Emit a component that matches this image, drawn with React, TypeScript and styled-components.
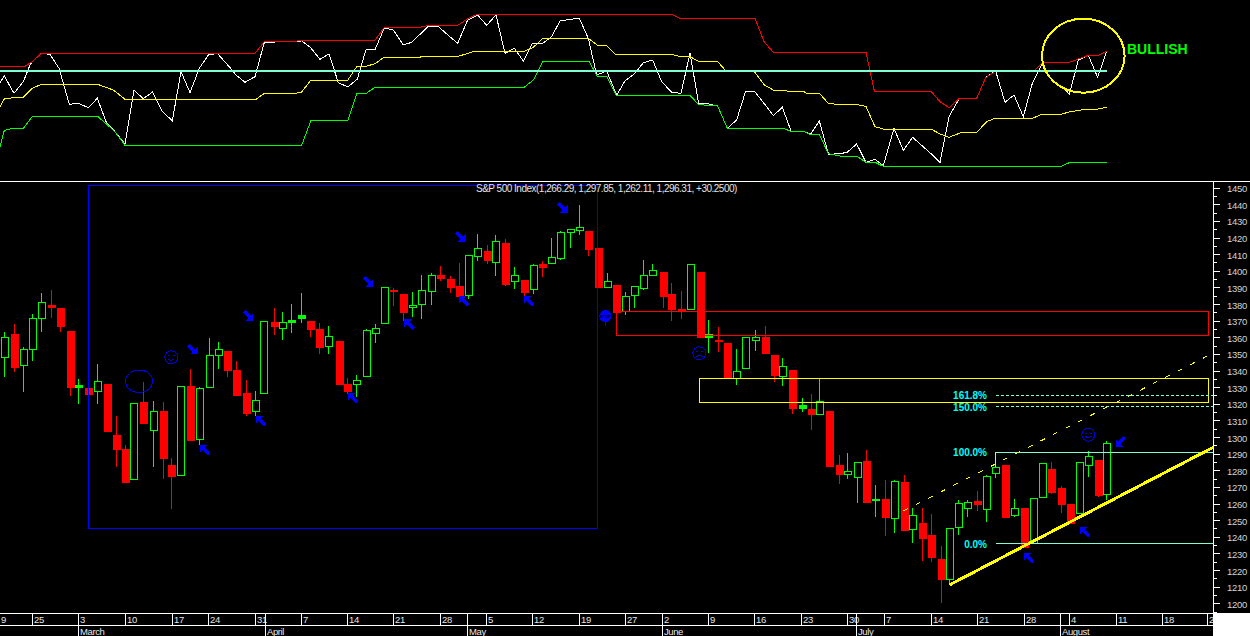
import React from 'react'
import styled, { createGlobalStyle } from 'styled-components'

const GREEN = '#00ff00'
const RED = '#ff0000'
const BLUE = '#0000ff'
const YELLOW = '#ffff00'
const AQUA = '#7fffd4'

const GlobalStyle = createGlobalStyle`
  html, body {
    margin: 0;
    height: 636px;
    overflow: hidden;
    background: #000;
    font-family: "Liberation Sans", Arial, sans-serif;
  }
`
const Page = styled.div`
  width: 1250px;
  height: 636px;
  display: flex;
  flex-direction: column;
  overflow: hidden;
  background: #000;
`
const IndicatorPanel = styled.div`
  height: 181px;
  flex: none;
  border-bottom: 1px solid #fff;
`
const Plot = styled.svg`
  display: block;
  shape-rendering: crispEdges;
`
const MainRow = styled.div`
  height: 431px;
  flex: none;
  display: flex;
`
const ChartArea = styled.div`
  position: relative;
  width: 1213px;
  flex: none;
`
const ChartTitle = styled.div`
  position: absolute;
  left: 476px;
  top: 0;
  font-size: 10px;
  letter-spacing: -0.5px;
  line-height: 13px;
  color: #e4e4e4;
  white-space: nowrap;
`
const PriceAxis = styled.div`
  flex: 1;
  border-left: 1px solid #fff;
  padding-top: 2px;
  overflow: hidden;
`
const PriceRow = styled.div`
  height: 8.32px;
  display: flex;
  align-items: center;
`
const TickSlot = styled.div`
  width: 13px;
  flex: none;
`
const Tick = styled.div<{ $major: boolean }>`
  width: ${(p) => (p.$major ? 6 : 3)}px;
  height: 1px;
  background: #fff;
`
const PriceLabel = styled.span`
  margin-top: 2px;
  font-size: 9.5px;
  letter-spacing: -0.3px;
  line-height: 8px;
  color: #d4d4d4;
`
const BottomRow = styled.div`
  flex: 1;
  display: flex;
`
const DateColumn = styled.div`
  width: 1213px;
  flex: none;
  border-top: 1px solid #fff;
`
const DateRow = styled.div`
  height: 11px;
  display: flex;
  border-bottom: 1px solid #fff;
`
const MonthRow = styled.div`
  height: 10px;
  display: flex;
`
const AxisCell = styled.div<{ $width: number; $open?: boolean }>`
  width: ${(p) => p.$width}px;
  flex: none;
  box-sizing: border-box;
  padding-left: 1px;
  border-left: ${(p) => (p.$open ? 'none' : '1px solid #fff')};
  font-size: 9.5px;
  letter-spacing: -0.4px;
  line-height: 11px;
  color: #e8e8e8;
  white-space: nowrap;
`
const Corner = styled.div`
  flex: 1;
  background: #fff;
`
const Bullish = styled.text`
  font-size: 14px;
  font-weight: 700;
  fill: ${GREEN};
`
const FibLabel = styled.text`
  font-size: 10px;
  font-weight: 700;
  fill: #00ffff;
  text-anchor: end;
`
const StopText = styled.text`
  font-size: 4px;
  font-weight: 700;
  fill: #000;
  text-anchor: middle;
`

// everything below was traced off the 3x crops, so divide by 3 and add the crop origin
const trace = (ox: number, oy: number, flat: number[]) => {
  const out: string[] = []
  for (let i = 0; i < flat.length; i += 2) {
    out.push(`${ox + flat[i] / 3},${oy + flat[i + 1] / 3}`)
  }
  return out.join(' ')
}

const indicatorLines: [string, string][] = [
  ['#fff', trace(0, 0, [0,248,13,228,42,280,70,245,90,195,97,185,124,160,150,163,177,205,208,313,236,310,265,323,292,295,320,370,345,395,375,432,402,271,430,296,458,276,487,335,517,362,543,215,570,278,598,205,625,165,652,160,692,205,708,225,735,247,765,230,793,127,890,124,905,123,932,143,960,178,987,162,1015,248,1044,261,1072,237,1098,149,1125,149,1153,84,1180,90,1210,135,1235,127,1260,103])],
  ['#fff', trace(420, 0, [0,103,25,78,55,80,113,130,143,60,173,45,200,76,228,45,255,160,283,145,310,183,337,130,368,130,395,110,420,63,450,58,478,55,505,115,530,225,560,213,590,285,615,243,645,220,670,188,698,180,725,245,755,277,783,280,810,160,836,310,858,310,893,318,922,385,950,360,977,273,1003,273,1032,310,1060,347,1087,322,1113,393,1150,394,1172,402,1198,363,1225,461])],
  ['#fff', trace(830, 0, [-5,464,50,458,80,432,108,487,135,478,160,497,192,385,220,451,248,412,302,460,330,488,357,350,388,295,440,295,467,233,497,213,525,307,552,285,580,350,607,250,638,187])],
  ['#fff', trace(830, 0, [705,268,718,283,745,180,775,166,803,232,830,154])],
  [YELLOW, trace(0, 0, [0,320,14,295,70,292,97,265,124,253,293,253,340,270,375,298,768,298,793,280,888,280,905,276,932,241,1043,241,1070,200,1098,199,1125,191,1152,172,1260,172])],
  [YELLOW, trace(420, 0, [0,172,5,169,115,169,163,154,312,154,340,142,368,115,505,115,532,135,558,135,586,163,755,163,783,170,810,170,835,184,892,184,920,215,1003,215,1032,254,1060,270,1095,270,1100,273,1150,274,1160,280,1198,280,1225,310,1260,314])],
  [YELLOW, trace(830, 0, [30,314,80,314,108,319,135,380,160,387,303,387,330,402,357,412,395,397,440,397,470,365,497,354,610,354,635,343,693,343,720,335,775,327,805,327,830,322])],
  [GREEN, trace(0, 0, [0,440,13,391,40,385,70,385,97,349,293,349,345,395,375,436,905,436,933,361,1044,361,1070,281,1098,281,1124,262,1260,262])],
  [GREEN, trace(420, 0, [0,262,312,262,340,240,368,184,507,184,532,229,560,229,588,286,810,286,836,314,893,318,922,385,1090,385,1112,394,1150,394,1170,403,1198,403,1225,461,1260,468])],
  [GREEN, trace(830, 0, [30,468,80,468,108,487,135,487,160,499,693,499,720,487,830,487])],
  [RED, trace(0, 0, [0,199,75,199,97,185,124,160,765,160,793,125,890,124,893,121,1125,121,1153,82,1260,82])],
  [RED, trace(420, 0, [0,82,30,75,115,75,145,55,172,43,755,43,780,55,1005,55,1032,125,1060,157,1260,157])],
  [RED, trace(830, 0, [30,157,108,157,133,273,302,273,330,305,357,323,388,295,440,295,467,233,497,213,612,213,638,187,718,187,775,166,805,166,830,154])],
]

type Kind = 'g' | 'r' | 'G'
// kind, x, box top, box bottom, wick top, wick bottom
type Row = [Kind, number, number, number, number?, number?]
type Candle = { kind: Kind; x: number; top: number; bottom: number; high: number; low: number }

const candleSet = (ox: number, oy: number, rows: Row[]): Candle[] =>
  rows.map(([kind, x, top, bottom, high, low]) => ({
    kind,
    x: ox + x / 3,
    top: oy + top / 3,
    bottom: oy + bottom / 3,
    high: oy + (high ?? top) / 3,
    low: oy + (low ?? bottom) / 3,
  }))

const candles: Candle[] = [
  ...candleSet(0, 280, [
    ['g',14,172,232,156,290],['r',44,162,260,132,275],['g',69,208,254,201,335],['g',96,115,208,102,243],
    ['g',125,67,115,40,155],['r',154,75,80,30,113],['r',182,84,137,84,155],['r',210,153,320,153,347],
    ['G',236,316,320,297,371],['r',265,324,341,318,434],['g',292,304,334,252,371],['r',321,312,453,312,456],
    ['r',350,465,507,408,560],['r',377,507,605,495,605],['g',401,370,598],['r',431,366,429,306,432],
    ['g',459,394,449,363,560],['r',489,393,533,366,597],['r',515,555,587,534,687],['g',541,319,586],
    ['r',571,318,480,267,480],['g',598,325,476,321,495],['g',627,226,320,174,320],['g',654,208,226,186,267],
    ['r',682,213,269,213,290],['r',710,270,344,243,344],['r',738,339,398,300,407],['g',765,361,392,333,407],
  ]),
  ...candleSet(240, 190, [
    ['g',71,392,610],['r',102,396,407,354,435],['g',127,397,415,366,449],['G',155,390,395,342,429],
    ['G',185,375,383,309,398],['r',212,393,416,393,441],['r',239,417,471,399,491],['g',266,439,467,408,491],
    ['r',297,453,581,453,585],['r',323,582,603,564,611],['g',349,571,583,555,620],['g',378,421,559,417,559],
    ['g',405,415,428,402,458],['g',433,292,400],['r',461,301,304,294,347],['r',490,312,365,312,392],
    ['g',516,346,352,306,381],['g',544,299,341,255,386],['g',573,256,304,250,345],['r',602,255,263,228,272],
    ['r',630,267,291,258,308],['r',657,288,317,220,317],['g',684,196,314,196,328],['g',711,175,199,132,212],
    ['r',741,183,209,165,221],['g',767,154,217,135,258],['r',795,159,281,148,287],['g',822,256,274,232,296],
    ['r',852,270,305,270,320],['g',879,226,298,222,312],
  ]),
  ...candleSet(470, 180, [
    ['r',217,252,261,243,291],['g',243,232,248,174,248],['g',270,156,233,153,239],['g',300,148,155,148,204],
    ['g',327,142,149,75,165],['r',355,153,207,153,228],['r',384,204,321],['g',411,304,320,279,320],
    ['r',439,315,395],['g',467,347,393,336,405],['g',493,319,344,319,384],['g',520,284,323,240,330],
    ['g',548,271,284,252,284],['r',579,276,347,276,384],['r',605,342,387,309,423],['r',633,387,394,333,417],
    ['g',660,253,386],['r',690,276,471,276,474],['G',716,462,470,420,519],['r',745,480,483,441,516],
    ['g',826,472,565],['g',855,472,479,450,513],['r',885,471,519,438,519],
  ]),
  ...candleSet(690, 340, [
    ['r',112,9,115],['g',138,94,115,27,135],['r',252,45,104,45,125],['g',277,79,109,55,138],
    ['r',306,90,203,90,222],['G',336,195,203,174,216],['r',363,207,221,162,270],['g',389,184,221,115,221],
    ['r',417,213,377],['r',447,376,401,345,432],['g',472,393,401,339,417],['g',501,367,410,367,489],
    ['r',530,363,485,330,485],['G',556,477,480,435,531],['r',585,477,531,420,588],['g',612,424,533,420,579],
    ['r',642,426,570,405,570],['g',667,526,566,504,609],['r',696,549,594,504,663],['r',723,585,651,522,666],
    ['r',753,657,717,618,789],['g',778,565,718,565,735],
  ]),
  ...candleSet(950, 340, [
    ['g',25,490,560,480,585],['g',53,487,503,480,531],['r',83,484,492,453,513],['g',109,409,506,405,546],
    ['g',137,382,398,370,414],['r',166,375,531,375,533],['g',192,505,524,477,530],['r',222,504,620],
    ['g',249,475,610],['g',276,370,470],['r',305,387,457,366,463],['r',333,444,491,438,519],
    ['r',360,491,549],['g',387,367,518],['g',415,347,374,333,411],['r',444,360,465,360,471],
    ['g',470,310,461,304,481],
  ]),
]

const CandleMark = ({ candle }: { candle: Candle }) => {
  const { kind, x, top, bottom, high, low } = candle
  const cx = Math.floor(x)
  const color = kind === 'r' ? RED : GREEN
  const y = Math.round(top)
  const h = Math.max(Math.round(bottom) - y, 1)
  return (
    <g>
      <line x1={cx + 0.5} x2={cx + 0.5} y1={Math.round(high)} y2={Math.round(low)} stroke={color} />
      {kind === 'g' ? (
        <rect x={cx - 2.5} y={y + 0.5} width={7} height={h} fill="#000" stroke={color} />
      ) : (
        <rect x={cx - 3} y={y} width={8} height={h + 1} fill={color} />
      )}
    </g>
  )
}

// points up-left when not rotated
const Arrow = ({ x, y, turn = 0 }: { x: number; y: number; turn?: number }) => (
  <polygon
    transform={`translate(${x} ${y}) rotate(${turn})`}
    points="-5,-5 2.5,-5 0,-2.5 5.5,3 3,5.5 -2.5,0 -5,2.5"
    fill={BLUE}
  />
)

const Face = ({ x, y, happy }: { x: number; y: number; happy: boolean }) => (
  <g transform={`translate(${x} ${y})`} fill="none" stroke="#0000e0">
    <circle r={6.5} />
    <path d="M-3.5 -1.5h2M1.5 -1.5h2" />
    <path d={happy ? 'M-3 1.5q3 3 6 0' : 'M-3 3.5q3 -3 6 0'} />
  </g>
)

const upLeft = [[205,450],[261,421],[352.7,398],[409.3,324.3],[464,301],[529,301],[1029,558.3],[1085,532.3]]
const downRight = [[248.3,315.5],[192.7,349.3],[368.3,281.7],[460.7,236.7],[562.7,207.7]]

const dates: [number, string][] = [
  [0,'9'],[32,'25'],[78,'3'],[125,'10'],[172,'17'],[208,'24'],[255,'31'],[265,''],[301,'7'],[347,'14'],[393,'21'],[440,'28'],
  [467,''],[486,'5'],[532,'12'],[579,'19'],[625,'27'],[662,'2'],[708,'9'],[754,'16'],[801,'23'],[847,'30'],[856,''],[884,'7'],
  [931,'14'],[977,'21'],[1024,'28'],[1060,''],[1069,'4'],[1116,'11'],[1162,'18'],[1207,'2'],
]
const months: [number, string][] = [
  [0,''],[78,'March'],[265,'April'],[467,'May'],[662,'June'],[856,'July'],[1060,'August'],
]
const cellWidth = (list: [number, string][], i: number) => (i + 1 < list.length ? list[i + 1][0] : 1213) - list[i][0]

const priceRows = Array.from({ length: 52 }, (_, i) => 1450 - i * 5)

export default function App() {
  return (
    <Page>
      <GlobalStyle />
      <IndicatorPanel>
        <Plot width={1250} height={181} viewBox="0 0 1250 181">
          {indicatorLines.map(([color, points], i) => (
            <polyline key={i} points={points} fill="none" stroke={color} />
          ))}
          <rect x={0} y={70} width={1107} height={2} fill={AQUA} />
          <ellipse cx={1083.3} cy={55.7} rx={41.3} ry={37} fill="none" stroke={YELLOW} strokeWidth={2} />
          <Bullish x={1127} y={54}>BULLISH</Bullish>
        </Plot>
      </IndicatorPanel>
      <MainRow>
        <ChartArea>
          <Plot width={1213} height={431} viewBox="0 182 1213 431">
            {candles.map((c, i) => (
              <CandleMark key={i} candle={c} />
            ))}
            <rect x={88.5} y={185.5} width={509} height={343} fill="none" stroke={BLUE} />
            <ellipse cx={139} cy={381.3} rx={13.5} ry={11.3} fill="none" stroke="#0000e0" />
            <path d="M616.5 311.5V335.5H1208.5V311.5Z" fill="none" stroke={RED} />
            <rect x={699.5} y={378.5} width={509} height={24} fill="none" stroke={YELLOW} />
            <line x1={996} x2={1213} y1={395.5} y2={395.5} stroke={AQUA} strokeDasharray="3 2" />
            <line x1={996} x2={1213} y1={406.5} y2={406.5} stroke={AQUA} strokeDasharray="3 2" />
            <path d="M995.5 467V452.5H1213" fill="none" stroke={AQUA} />
            <line x1={996} x2={1213} y1={543.5} y2={543.5} stroke={AQUA} />
            <line x1={903.3} y1={511} x2={1209.3} y2={355} stroke={YELLOW} strokeDasharray="5 9" />
            <line x1={949.3} y1={585} x2={1213.3} y2={447.3} stroke={YELLOW} strokeWidth={3} />
            {upLeft.map(([x, y], i) => (
              <Arrow key={i} x={x} y={y} />
            ))}
            {downRight.map(([x, y], i) => (
              <Arrow key={i} x={x} y={y} turn={180} />
            ))}
            <Arrow x={1120.7} y={441.7} turn={-90} />
            <Face x={171.3} y={357.3} happy />
            <Face x={699.3} y={353.3} happy={false} />
            <Face x={1088.3} y={434.7} happy />
            <line x1={605.5} x2={605.5} y1={320} y2={326} stroke={BLUE} />
            <circle cx={605.3} cy={316.2} r={6} fill={BLUE} />
            <StopText x={605.3} y={318}>STOP</StopText>
            <FibLabel x={987} y={399}>161.8%</FibLabel>
            <FibLabel x={987} y={411}>150.0%</FibLabel>
            <FibLabel x={987} y={456}>100.0%</FibLabel>
            <FibLabel x={987} y={548}>0.0%</FibLabel>
          </Plot>
          <ChartTitle>S&amp;P 500 Index(1,266.29, 1,297.85, 1,262.11, 1,296.31, +30.2500)</ChartTitle>
        </ChartArea>
        <PriceAxis>
          {priceRows.map((price) => {
            const major = price % 10 === 0
            return (
              <PriceRow key={price}>
                <TickSlot>
                  <Tick $major={major} />
                </TickSlot>
                {major && <PriceLabel>{price}</PriceLabel>}
              </PriceRow>
            )
          })}
        </PriceAxis>
      </MainRow>
      <BottomRow>
        <DateColumn>
          <DateRow>
            {dates.map(([x, label], i) => (
              <AxisCell key={x} $width={cellWidth(dates, i)} $open={i === 0}>
                {label}
              </AxisCell>
            ))}
          </DateRow>
          <MonthRow>
            {months.map(([x, label], i) => (
              <AxisCell key={x} $width={cellWidth(months, i)} $open={i === 0}>
                {label}
              </AxisCell>
            ))}
          </MonthRow>
        </DateColumn>
        <Corner />
      </BottomRow>
    </Page>
  )
}
